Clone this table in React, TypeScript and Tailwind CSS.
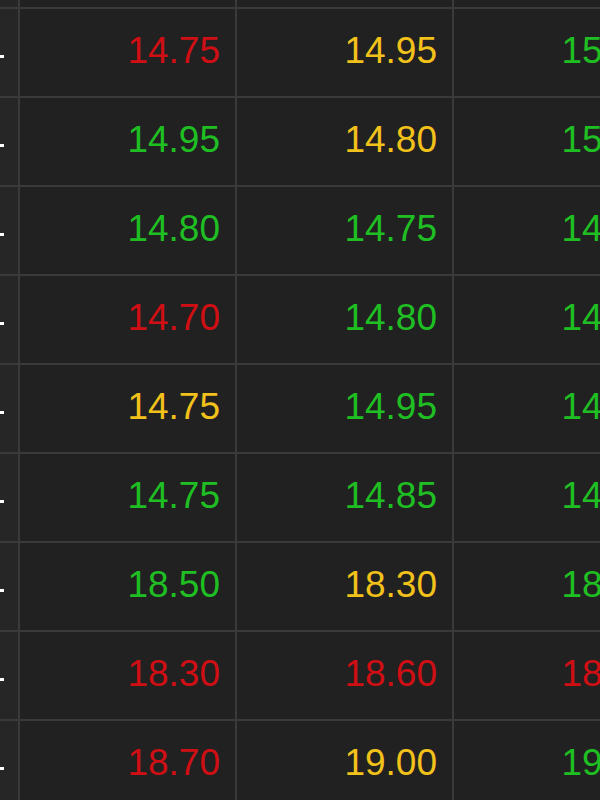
const rows: [string, string, string, string, string, string][] = [
  ['14.75', 'red', '14.95', 'yellow', '15.00', 'green'],
  ['14.95', 'green', '14.80', 'yellow', '15.05', 'green'],
  ['14.80', 'green', '14.75', 'green', '14.95', 'green'],
  ['14.70', 'red', '14.80', 'green', '14.90', 'green'],
  ['14.75', 'yellow', '14.95', 'green', '14.90', 'green'],
  ['14.75', 'green', '14.85', 'green', '14.95', 'green'],
  ['18.50', 'green', '18.30', 'yellow', '18.60', 'green'],
  ['18.30', 'red', '18.60', 'red', '18.80', 'red'],
  ['18.70', 'red', '19.00', 'yellow', '19.20', 'green'],
];

const colorClass: Record<string, string> = {
  red: 'text-[#cf0f14]',
  yellow: 'text-[#f2c21b]',
  green: 'text-[#1fbf23]',
};

function Cell({ value, color }: { value: string; color: string }) {
  return (
    <div className="bg-[#212121] flex items-center justify-end pr-[15px] pb-[4px]">
      <span className={`text-[37px] leading-none ${colorClass[color]}`}>{value}</span>
    </div>
  );
}

export default function App() {
  return (
    <div
      className="w-[600px] h-[800px] overflow-hidden bg-[#3a3a3a]"
      style={{ fontFamily: '"Liberation Sans", Arial, sans-serif' }}
    >
      <div className="grid grid-cols-[18px_215px_215px_215px] grid-rows-[7px] auto-rows-[87px] gap-[2px]">
        <div className="bg-[#262626]" />
        <div className="bg-[#212121]" />
        <div className="bg-[#212121]" />
        <div className="bg-[#212121]" />
        {rows.map((r, i) => (
          <div key={i} className="contents">
            <div className="bg-[#262626] flex items-center pt-[8px]">
              <div className="w-[4px] h-[3px] bg-white" />
            </div>
            <Cell value={r[0]} color={r[1]} />
            <Cell value={r[2]} color={r[3]} />
            <Cell value={r[4]} color={r[5]} />
          </div>
        ))}
      </div>
    </div>
  );
}
